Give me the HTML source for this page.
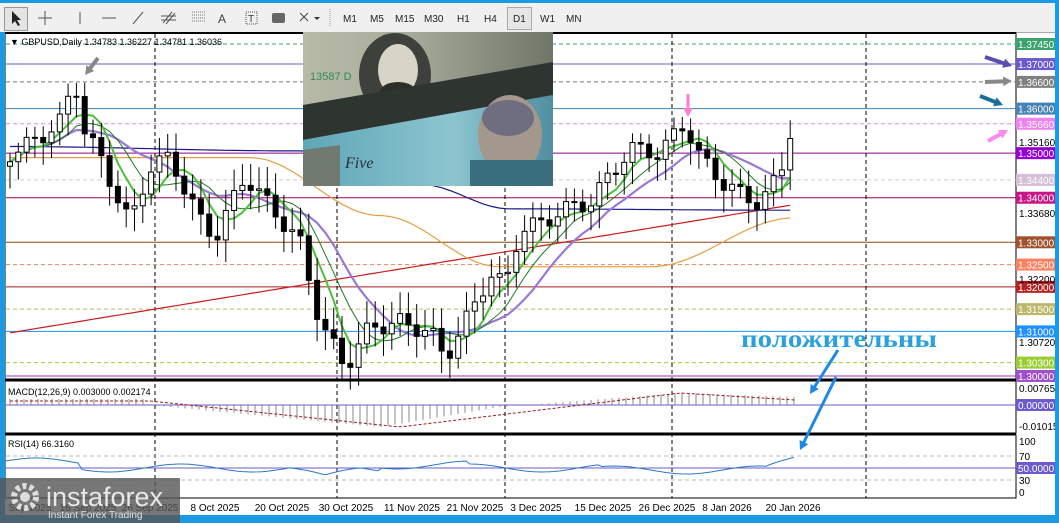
<!DOCTYPE html>
<html><head><meta charset="utf-8"><style>
body{margin:0;width:1059px;height:523px;overflow:hidden;background:#1b9ae4;font-family:"Liberation Sans",sans-serif}
#tb{position:absolute;left:0;top:3px;width:1059px;height:29px;background:#f0f0f0;border-bottom:1px solid #aaa}
.tf{position:absolute;top:11px;font-size:10px;color:#222}
svg{position:absolute;left:0;top:0}
</style></head><body>
<div id="tb">
<div style="position:absolute;left:4px;top:4px;width:22px;height:22px;border:1px solid #999;background:#e4e4e4"></div>
<svg width="340" height="29" style="top:0">
<path d="M12 8 L12 21 L15 18 L18 23 L20 22 L17 17 L21 17 Z" fill="#222"/>
<path d="M45 8 V22 M38 15 H52" stroke="#555"/>
<path d="M80 9 V21" stroke="#555"/><path d="M102 15 H116" stroke="#555"/><path d="M133 21 L143 9" stroke="#555"/>
<path d="M163 20 L172 9 M166 21 L175 10 M161 13 H176 M161 17 H176" stroke="#555"/>
<path d="M192 9 H206 M192 12 H206 M192 15 H206 M192 18 H206" stroke="#777" stroke-dasharray="1 1"/>
<text x="218" y="20" font-size="12" fill="#444">A</text>
<rect x="246" y="9" width="11" height="12" fill="none" stroke="#555" stroke-dasharray="1 1"/><text x="248" y="19" font-size="10" fill="#333">T</text>
<rect x="272" y="10" width="13" height="10" rx="2" fill="#666"/>
<path d="M300 10 L304 14 L308 10 M300 18 L304 14 L308 18" stroke="#444" fill="none"/><path d="M314 14 L320 14 L317 17Z" fill="#333"/>
<path d="M330 6 V24" stroke="#999" stroke-dasharray="1 1"/>
</svg>
<div class="tf" style="left:343px">M1</div><div class="tf" style="left:370px">M5</div><div class="tf" style="left:395px">M15</div><div class="tf" style="left:424px">M30</div><div class="tf" style="left:457px">H1</div><div class="tf" style="left:484px">H4</div>
<div style="position:absolute;left:507px;top:4px;width:23px;height:21px;border:1px solid #aaa;background:#e6e6e6"></div>
<div class="tf" style="left:513px">D1</div><div class="tf" style="left:540px">W1</div><div class="tf" style="left:566px">MN</div>
</div>
<svg id="c" width="1059" height="523" style="top:0"></svg>
<script>
var s='';
function L(x1,y1,x2,y2,c,w,d){s+='<line x1="'+x1+'" y1="'+y1+'" x2="'+x2+'" y2="'+y2+'" stroke="'+c+'" stroke-width="'+(w||1)+'"'+(d?' stroke-dasharray="'+d+'"':'')+'/>';}
function R(x,y,w,h,f,st){s+='<rect x="'+x+'" y="'+y+'" width="'+w+'" height="'+h+'" fill="'+f+'"'+(st?' stroke="'+st+'"':'')+'/>';}
function T(x,y,t,sz,c,a,extra){s+='<text x="'+x+'" y="'+y+'" font-size="'+sz+'" fill="'+c+'"'+(a?' text-anchor="'+a+'"':'')+(extra||'')+'>'+t+'</text>';}
R(5,33,1050,482,'#fff');
R(5,33,1011,346,'#fff','#000');R(5,381,1011,52,'#fff','#000');R(5,435,1011,63,'#fff','#000');
L(5,33,1016,33,'#000',2);L(5,380,1016,380,'#000',2);L(5,434,1016,434,'#000',2);
function py(p){return 44+(1.3745-p)*4456;}
var lv=[[1.3745,'#3aa46c','4 3','#3aa46c'],[1.37,'#6a5acd','','#6a5acd'],[1.366,'#777','4 3','#808080'],[1.36,'#4682b4','','#4682b4'],[1.3566,'#ee82ee','4 3','#ee82ee'],[1.35,'#8b008b','','#9400d3'],[1.344,'#ccc','4 3','#d8bfd8'],[1.34,'#a0005a','','#c71585'],[1.33,'#8b4513','','#a0522d'],[1.325,'#f08050','4 3','#fa8060'],[1.32,'#a01c1c','','#b22222'],[1.315,'#bdb76b','4 3','#bdb76b'],[1.31,'#1e90ff','','#1e90ff'],[1.303,'#9acd32','4 3','#9acd32'],[1.30,'#9932cc','','#a050c8']];
lv.forEach(function(l){L(6,py(l[0]),1016,py(l[0]),l[1],1,l[2]);});
[155,337,505,672,866].forEach(function(x){L(x,34,x,498,'#000',1,'4 3');});
var k=[[10,1.350],[30,1.352],[60,1.357],[75,1.366],[85,1.355],[100,1.349],[130,1.334],[150,1.347],[170,1.349],[200,1.335],[215,1.331],[245,1.345],[270,1.338],[300,1.330],[320,1.312],[345,1.302],[370,1.311],[400,1.312],[430,1.310],[445,1.304],[470,1.314],[490,1.323],[505,1.320],[520,1.333],[540,1.334],[560,1.337],[590,1.339],[610,1.345],[630,1.351],[660,1.350],[685,1.357],[700,1.349],[720,1.344],[745,1.340],[760,1.339],[780,1.345],[795,1.360]];
function f(x){for(var i=0;i<k.length-1;i++){if(x<=k[i+1][0]){var t=(x-k[i][0])/(k[i+1][0]-k[i][0]);return k[i][1]+t*(k[i+1][1]-k[i][1]);}}return k[k.length-1][1];}
function g(pts,x){for(var i=0;i<pts.length-1;i++){if(x<=pts[i+1][0]){var t=(x-pts[i][0])/(pts[i+1][0]-pts[i][0]);t=(1-Math.cos(t*Math.PI))/2;return pts[i][1]+t*(pts[i+1][1]-pts[i][1]);}}return pts[pts.length-1][1];}
var cl=[],xs=[];
for(var x=10;x<=795;x+=8.3){var c=f(x)+Math.sin(x*1.7)*0.002;cl.push(c);xs.push(x);}
function ma(n){var o=[];for(var i=0;i<cl.length;i++){var a=0,m=0;for(var j=Math.max(0,i-n+1);j<=i;j++){a+=cl[j];m++;}o.push(a/m);}return o;}
function pl(arr,c,w){var d='';arr.forEach(function(v,i){d+=(i?'L':'M')+xs[i].toFixed(1)+' '+py(v).toFixed(1);});s+='<path d="'+d+'" fill="none" stroke="'+c+'" stroke-width="'+w+'"/>';}
var r200=[],b100=[],o50=[];
var bp=[[5,1.3515],[300,1.3505],[420,1.343],[510,1.3375],[795,1.3372]];
var op=[[5,1.349],[250,1.349],[380,1.336],[500,1.3245],[650,1.3245],[795,1.3355]];
xs.forEach(function(x){r200.push(1.3095+(x-5)/790*0.029);b100.push(g(bp,x));o50.push(g(op,x));});
pl(r200,'#c81e1e',1.2);pl(o50,'#e0a040',1.2);pl(b100,'#1a1a8c',1.2);
pl(ma(12),'#9a78d8',2.2);pl(ma(8),'#1e7a1e',1);pl(ma(5),'#4cbf3c',2);
xs.forEach(function(x,i){var c=cl[i],o=i?cl[i-1]:c-0.001;var hi=Math.max(o,c)+0.002+Math.abs(Math.sin(i*3.1))*0.003,lo=Math.min(o,c)-0.002-Math.abs(Math.cos(i*2.3))*0.003;
L(x,py(hi),x,py(lo),'#000');var y1=py(Math.max(o,c)),h=Math.max(1,py(Math.min(o,c))-y1);R(x-2.5,y1,5,h,c>o?'#fff':'#000','#000');});
T(10,45,'&#9660; GBPUSD,Daily  1.34783 1.36227 1.34781 1.36036',9,'#000');
s+='<defs><linearGradient id="g1" x1="0" y1="0" x2="1" y2="0"><stop offset="0" stop-color="#b8baa8"/><stop offset=".4" stop-color="#a9ad9c"/><stop offset="1" stop-color="#6f7668"/></linearGradient><linearGradient id="g2" x1="0" y1="0" x2="1" y2="0"><stop offset="0" stop-color="#5fa6b8"/><stop offset=".6" stop-color="#8cc5cf"/><stop offset="1" stop-color="#4f8fa0"/></linearGradient></defs>';
R(303,32,250,154,'url(#g1)');
s+='<ellipse cx="395" cy="75" rx="36" ry="42" fill="#3e413b"/><ellipse cx="398" cy="70" rx="20" ry="26" fill="#d8d4c8"/><ellipse cx="398" cy="92" rx="18" ry="10" fill="#2c2f2a"/>';
s+='<path d="M303 105 L553 62 L553 95 L303 140Z" fill="#2e3430"/>';
s+='<path d="M303 140 L553 95 L553 186 L303 186Z" fill="url(#g2)"/>';
s+='<path d="M303 150 L340 145 L340 186 L303 186Z" fill="#6f7a70"/>';
s+='<ellipse cx="510" cy="135" rx="32" ry="40" fill="#a4988c"/><ellipse cx="508" cy="118" rx="26" ry="18" fill="#6e6e80"/><rect x="470" y="160" width="83" height="26" fill="#3a6f80"/>';
T(310,80,'13587 D',11,'#2e8b57');T(345,168,'Five',16,'#203040','','font-family="Liberation Serif" font-style="italic"');
function ar(x1,y1,x2,y2,c,w){var a=Math.atan2(y2-y1,x2-x1),h=10;L(x1,y1,x2-Math.cos(a)*6,y2-Math.sin(a)*6,c,w);s+='<path d="M'+x2+' '+y2+' L'+(x2-h*Math.cos(a-0.5))+' '+(y2-h*Math.sin(a-0.5))+' L'+(x2-h*Math.cos(a+0.5))+' '+(y2-h*Math.sin(a+0.5))+'Z" fill="'+c+'"/>';}
ar(98,58,85,75,'#888',4);ar(688,94,688,117,'#ff7fd0',3);
ar(985,57,1012,66,'#5a4fb0',4);ar(985,82,1012,81,'#888',4);ar(980,96,1003,105,'#1a6e9a',4);ar(988,141,1008,130,'#ff88ee',4);
ar(838,350,810,394,'#1e88e5',3);ar(836,377,800,450,'#1e88e5',3);
s+='<text x="741" y="347" font-size="25" font-weight="bold" fill="#2aa0dc" font-family="Liberation Serif,serif" textLength="196" lengthAdjust="spacingAndGlyphs">положительны</text>';
lv.forEach(function(l){var y=py(l[0]);R(1016,y-6,40,12,l[3]);T(1018,y+4,l[0].toFixed(5),10,'#fff');});
[[1.3516,145],[1.3368,216],[1.3220,282],[1.3072,345]].forEach(function(a){T(1019,a[1]+1,a[0].toFixed(5),10,'#000');});
T(8,395,'MACD(12,26,9) 0.003000 0.002174',9,'#000');L(6,405,1016,405,'#6a5acd',1);
var md='';for(var x=10;x<=795;x+=7){var v=x<150?6:(x<380?-((x-150)/230)*22:(x<500?-22+(x-380)/120*20:(x<680?-2+(x-500)/180*14:12-(x-680)/115*4)));L(x,405,x,405-v,'#888');var sg=x<150?4:(x<400?4-((x-150)/250)*26:(x<680?-22+(x-400)/280*34:12-(x-680)/115*7));md+=(x==10?'M':'L')+x+' '+(405-sg);}
s+='<path d="'+md+'" fill="none" stroke="#a01818" stroke-dasharray="3 2"/>';
R(1016,399,40,12,'#6a5acd');T(1018,409,'0.00000',10,'#fff');T(1019,392,'0.007655',10,'#000');T(1019,430,'-0.01015',10,'#000');
T(8,447,'RSI(14) 66.3160',9,'#000');L(6,456,1016,456,'#bbb',1,'4 3');L(6,480,1016,480,'#bbb',1,'4 3');L(6,468,1016,468,'#6a5acd',1);
var rd='';for(var x=6;x<=795;x+=4){var v=468-4*Math.sin(x/23)-(x<80?6:0)+(x>290&&x<360?(x-290<35?(x-290)/35*11:11-(x-325)/35*11):0)+(x>380&&x<470?-3:0)+(x>600&&x<770?2:0)-(x>770?(x-770)/25*11:0);rd+=(x==6?'M':'L')+x+' '+v.toFixed(1);}
s+='<path d="'+rd+'" fill="none" stroke="#2a78c8"/>';
T(1019,445,'100',10,'#000');T(1019,460,'70',10,'#000');R(1016,462,40,12,'#6a5acd');T(1018,472,'50.0000',10,'#fff');T(1019,484,'30',10,'#000');T(1019,496,'0',10,'#000');
[['8 Oct 2025',215],['20 Oct 2025',282],['30 Oct 2025',346],['11 Nov 2025',412],['21 Nov 2025',475],['3 Dec 2025',536],['15 Dec 2025',603],['26 Dec 2025',667],['8 Jan 2026',727],['20 Jan 2026',793],['Sep 2025',30],['16 Sep 2025',88],['26 Sep 2025',150]].forEach(function(d){T(d[1],511,d[0],10,'#000','middle');});
R(0,515,1059,8,'#1b9ae4');R(1055,0,4,523,'#1b9ae4');R(0,32,5,490,'#1b9ae4');
s+='<rect x="0" y="478" width="180" height="45" fill="#555" opacity=".8"/>';
s+='<circle cx="25" cy="497" r="11" fill="none" stroke="#ddd" stroke-width="6" stroke-dasharray="4 3"/><circle cx="25" cy="497" r="5" fill="#ddd"/>';
T(46,506,'instaforex',27,'#e8e8e8');T(48,518,'Instant Forex Trading',10,'#e0e0e0');
document.getElementById('c').innerHTML=s;
</script>
</body></html>
